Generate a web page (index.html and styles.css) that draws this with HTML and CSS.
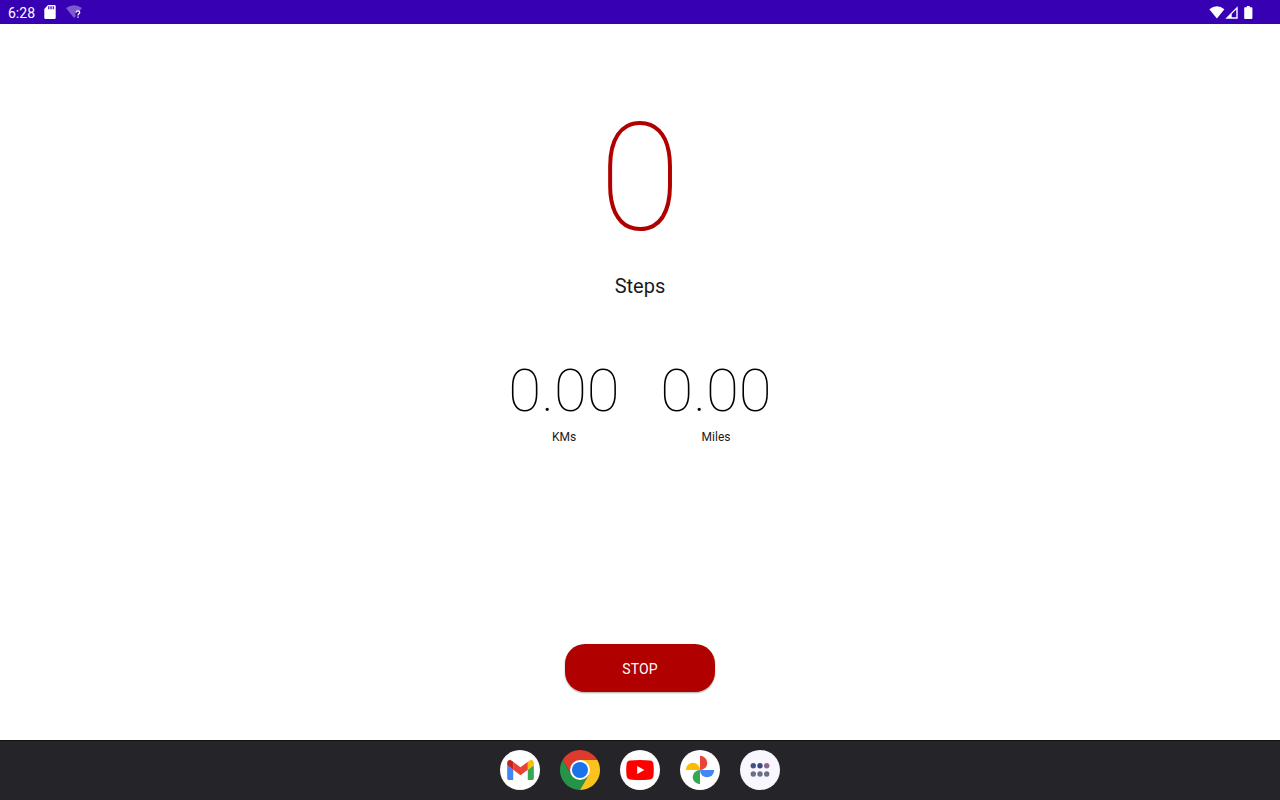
FILE: index.html
```html
<!DOCTYPE html>
<html lang="en">
<head>
    <meta charset="UTF-8">
    <meta name="viewport" content="width=device-width, initial-scale=1.0">
    <title>Step counter</title>
    <link rel="stylesheet" href="styles.css">
</head>
<body>

<header class="status-bar">
    <div class="status-left">
        <span class="clock">6:28</span>
        <svg class="sd-card" width="12" height="14" viewBox="0 0 12 14">
            <path d="M4 0h6.500A1.200 1.200 0 0 1 11.700 1.200V12.800A1.200 1.200 0 0 1 10.500 14H1.500A1.200 1.200 0 0 1 .3 12.800V4z" fill="#fff"/>
            <path d="M4 1.300h1.500v2.900H4zM6.300 1.300h1.500v2.900H6.300zM8.600 1.300h1.500v2.900H8.600z" fill="#3700b3" opacity=".8"/>
        </svg>
        <svg class="wifi-unknown" width="17" height="14" viewBox="0 0 17 14">
            <path d="M0 3Q8 -2.600 16 3L13.500 6Q9.500 5.500 9.300 9.300L10 11L8 13z" fill="#fff" opacity=".35"/>
            <path d="M10.300 7.500Q10.400 5.900 12 5.900T13.700 7.500C13.700 8.800 12 8.800 12 10.500" fill="none" stroke="#fff" stroke-width="1.300"/>
            <path d="M11.300 11.400h1.400v1.400h-1.400z" fill="#fff"/>
        </svg>
    </div>
    <div class="status-right">
        <svg width="16" height="13" viewBox="0 0 16 13">
            <path d="M.3 3.200Q8 -2.800 15.400 3.200L7.900 12.600z" fill="#fff"/>
        </svg>
        <svg width="13" height="13" viewBox="0 0 13 13">
            <path d="M12.700 .3V12.700H.3zM11.300 3.500L6.700 8.100V11.300H11.300z" fill="#fff" fill-rule="evenodd"/>
        </svg>
        <svg class="battery" width="9" height="13" viewBox="0 0 9 13">
            <path d="M2.800 0h3v1.200H7.600q.8 0 .8.8V12.200q0 .8-.8.8H1q-.8 0-.8-.8V2q0-.8.8-.8H2.800z" fill="#fff"/>
        </svg>
    </div>
</header>

<main class="counter">
    <div class="steps-value">0</div>
    <div class="steps-label">Steps</div>

    <div class="distances">
        <div class="distance">
            <div class="distance-value">0.00</div>
            <div class="distance-label">KMs</div>
        </div>
        <div class="distance">
            <div class="distance-value">0.00</div>
            <div class="distance-label">Miles</div>
        </div>
    </div>

    <button class="stop-button" type="button">STOP</button>
</main>

<nav class="taskbar">
    <!-- Gmail -->
    <a class="app">
        <svg width="27" height="20" viewBox="52 42 88 66">
            <path fill="#4285f4" d="M58 108h14V74L52 59v43c0 3.320 2.690 6 6 6"/>
            <path fill="#34a853" d="M120 108h14c3.320 0 6-2.690 6-6V59l-20 15"/>
            <path fill="#fbbc04" d="M120 48v26l20-15v-8c0-7.420-8.470-11.650-14.400-7.200"/>
            <path fill="#ea4335" d="M72 74V48l24 18 24-18v26L96 92"/>
            <path fill="#c5221f" d="M52 51v8l20 15V48l-5.600-4.200c-5.940-4.450-14.400-.22-14.400 7.200"/>
        </svg>
    </a>
    <!-- Chrome -->
    <a class="app chrome">
        <svg width="40" height="40" viewBox="0 0 40 40">
            <path d="M20 20L11.340 25L2.680 10A20 20 0 0 1 37.320 10H20z" fill="#dc3b2e"/>
            <path d="M2.680 10A20 20 0 0 0 20 40L28.660 25L20 20L11.340 25z" fill="#259448"/>
            <path d="M20 10H37.320A20 20 0 0 1 20 40L28.660 25z" fill="#fcc31e"/>
            <circle cx="20" cy="20" r="10" fill="#fff"/>
            <circle cx="20" cy="20" r="8" fill="#1a73e8"/>
        </svg>
    </a>
    <!-- YouTube -->
    <a class="app">
        <svg width="28" height="20" viewBox="0 0 28 20">
            <path d="M4 .6Q14 -.4 24 .6Q27 .9 27.400 4Q28.200 10 27.400 16Q27 19.100 24 19.400Q14 20.400 4 19.400Q1 19.100 .6 16Q-.2 10 .6 4Q1 .9 4 .6z" fill="#f00"/>
            <path d="M11.200 5.900L18.400 10L11.200 14.100z" fill="#fff"/>
        </svg>
    </a>
    <!-- Photos -->
    <a class="app">
        <svg width="30" height="30" viewBox="0 0 30 30">
            <path d="M15 15V.8A7.300 7.100 0 0 1 15 15z" fill="#ea4335"/>
            <path d="M15 15H29.200A7.100 7.300 0 0 1 15 15z" fill="#4285f4"/>
            <path d="M15 15V29.200A7.300 7.100 0 0 1 15 15z" fill="#34a853"/>
            <path d="M15 15H.8A7.100 7.300 0 0 1 15 15z" fill="#fbbc04"/>
        </svg>
    </a>
    <!-- All apps -->
    <a class="app all-apps">
        <svg width="20" height="14" viewBox="0 0 20 14">
            <circle cx="3.300" cy="2.800" r="2.700" fill="#3f5486"/>
            <circle cx="10" cy="2.800" r="2.700" fill="#344b86"/>
            <circle cx="16.700" cy="2.800" r="2.700" fill="#8c668a"/>
            <circle cx="3.300" cy="11" r="2.700" fill="#6c6f89"/>
            <circle cx="10" cy="11" r="2.700" fill="#6c6f89"/>
            <circle cx="16.700" cy="11" r="2.700" fill="#6c6f89"/>
        </svg>
    </a>
</nav>

</body>
</html>
```
FILE: styles.css
```css
* {
    box-sizing: border-box;
}
body {
    display: flex;
    flex-direction: column;
    height: 100vh;
    margin: 0;
    background-color: #fff;
    color: #1a1a1a;
    font-family: Roboto, "Liberation Sans", sans-serif;
}
.status-bar {
    display: flex;
    justify-content: space-between;
    height: 24px;
    padding: 0 27px 0 8px;
    background-color: #3700b3;
    color: #fff;
}
.status-left,
.status-right {
    display: flex;
    align-items: center;
}
.clock {
    width: 36px;
    font-size: 14px;
    line-height: 24px;
    padding-top: 2px;
}
.wifi-unknown {
    margin-left: 10px;
}
.battery {
    margin-left: 6px;
}
.counter {
    display: flex;
    flex: 1;
    flex-direction: column;
    align-items: center;
    padding: 67px 0 48px;
}
.steps-value {
    font-size: 150px;
    font-weight: 100;
    line-height: 176px;
    color: #b00000;
}
.steps-label {
    margin-top: 7px;
    font-size: 20px;
    line-height: 24px;
}
.distances {
    display: flex;
    gap: 40px;
    margin-top: 58px;
}
.distance {
    width: 112px;
    text-align: center;
}
.distance-value {
    font-size: 60px;
    font-weight: 100;
    line-height: 70px;
    color: #000;
}
.distance-label {
    margin-top: 4px;
    font-size: 12px;
    line-height: 14px;
}
.stop-button {
    width: 150px;
    height: 48px;
    margin-top: auto;
    padding: 2px 0 0;
    border: none;
    border-radius: 20px;
    background-color: #b00000;
    box-shadow: 0 1px 2px rgba(0, 0, 0, 0.35);
    color: #fff;
    font-family: inherit;
    font-size: 14px;
    letter-spacing: 0.1px;
}
.taskbar {
    display: flex;
    justify-content: center;
    align-items: center;
    gap: 20px;
    height: 60px;
    background-color: #252529;
    box-shadow: inset 0 1px #111;
}
.app {
    display: flex;
    justify-content: center;
    align-items: center;
    width: 40px;
    height: 40px;
    border-radius: 50%;
    background-color: #fff;
}
.chrome {
    background-color: transparent;
}
.all-apps {
    background-color: #f9f7fe;
}
```
